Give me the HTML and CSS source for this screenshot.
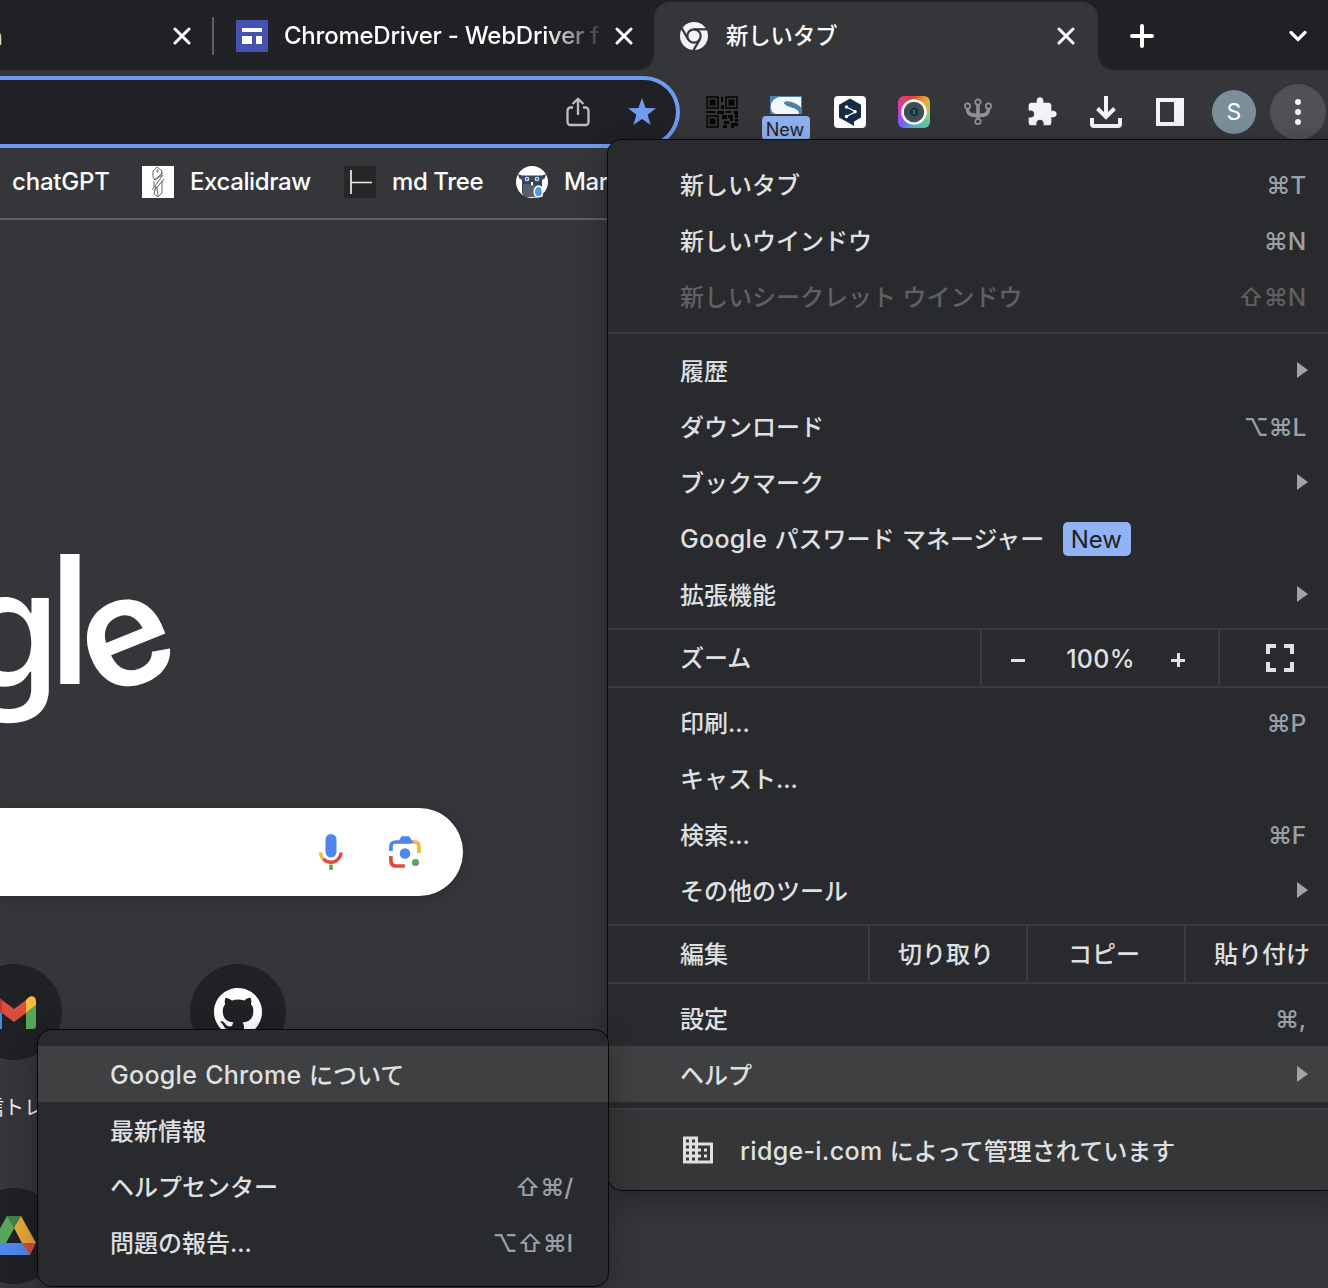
FILE: index.html
```html
<!DOCTYPE html>
<html lang="ja">
<head>
<meta charset="utf-8">
<title>新しいタブ</title>
<link rel="stylesheet" href="styles.css">
</head>
<body>
<svg class="defs" width="0" height="0" aria-hidden="true">
  <symbol id="close" viewBox="0 0 18 18"><path d="M2 2l14 14M16 2L2 16" fill="none" stroke="#fff" stroke-width="3" stroke-linecap="round"/></symbol>
  <symbol id="arrow" viewBox="0 0 11 16"><path d="M0 0l11 8-11 8z" fill="#a3a4a6"/></symbol>
</svg>
<div class="window">
  <header class="tabs">
    <div class="tabs-left">
      <span class="tab-cut"><span>n</span></span>
      <svg class="first-close" width="18" height="18"><use href="#close"/></svg>
      <i class="tab-sep"></i>
      <svg class="favicon" width="32" height="32" viewBox="0 0 32 32"><path fill="#4351af" d="M0 0h32v32H0z"/><path fill="#fff" d="M6 8h20v4H6zM6 16h10v8H6zM20 16h6v8h-6z"/></svg>
      <span class="tab-title faded">ChromeDriver - WebDriver f</span>
      <svg class="second-close" width="18" height="18"><use href="#close"/></svg>
    </div>
    <div class="tab-slot">
      <div class="tab-active">
        <svg width="28" height="28" viewBox="0 0 28 28"><circle cx="14" cy="14" r="14" fill="#f1f3f4"/><g fill="none" stroke="#35363a" stroke-width="2.2"><circle cx="14" cy="14" r="6.7"/><path d="M14 7.3h13"/><path d="M14 7.3h13" transform="rotate(120 14 14)"/><path d="M14 7.3h13" transform="rotate(240 14 14)"/></g></svg>
        <span class="tab-title">新しいタブ</span>
        <svg class="active-close" width="18" height="18"><use href="#close"/></svg>
      </div>
    </div>
    <div class="tabs-right">
      <svg width="24" height="24" viewBox="0 0 24 24"><path d="M12 2v20M2 12h20" stroke="#fff" stroke-width="4" stroke-linecap="round"/></svg>
      <svg width="20" height="14" viewBox="0 0 20 14"><path d="M3 3.500l7 7 7-7" fill="none" stroke="#fff" stroke-width="3.2" stroke-linecap="round"/></svg>
    </div>
  </header>

  <div class="toolbar">
    <div class="omnibox">
      <svg width="24" height="30" viewBox="0 0 24 30"><path d="M7 10.500H4.500a3 3 0 0 0-3 3V25a3 3 0 0 0 3 3h15a3 3 0 0 0 3-3V13.500a3 3 0 0 0-3-3H17M12 18V2M6.500 7L12 1.800 17.500 7" fill="none" stroke="#bcbdbf" stroke-width="2.300"/></svg>
      <svg width="30" height="30" viewBox="0 0 30 30"><path d="M15 1l3.600 10L29 11.200l-8.400 6.500 3.100 10.300L15 22l-8.700 6 3.100-10.300L1 11.200 11.400 11z" fill="#6f9cee"/></svg>
    </div>
    <div class="extensions">
      <div><svg width="32" height="32" viewBox="0 0 32 32"><g fill="none" stroke="#050505" stroke-width="1.500"><path d="M1 1h11v11H1zM20 1h11v11H20zM1 20h11v11H1z"/></g><path fill="#050505" d="M3.500 3.500h6v6h-6zM22.500 3.500h6v6h-6zM3.500 22.500h6v6h-6zM15 1h2v5h-2zM15 9h3v4h-3zM0 15h9v2H0zM11 15h7v3h-7zM20 15h5v2h-5zM28 15h4v7h-3v-4h-1zM16 19h5v4h-5zM22 19h5v6h-3v-3h-2zM18 25h5v3h-5zM25 27h7v3h-4v2h-3zM17 29h4v3h-4zM29 23h3v3h-3z"/></svg></div>
      <div class="ext-badged"><svg width="32" height="18" viewBox="0 0 32 18"><path fill="#4a80b0" d="M0 0h32v18H0z"/><path fill="#f5f7fa" d="M10 1h21v11C27 8 20 5 16 5.500c-3 .5-2 2.500 1 3.500 6 2 12 4 12 9H5C0 15 0 10 2 6c2-3 5-5 8-5z"/><path fill="#4a80b0" d="M14 7c2-3.500 12-1 17 4.500v5C26 10.500 16 12 14 7z"/></svg><b class="ext-new">New</b></div>
      <div><svg width="32" height="32" viewBox="0 0 32 32"><rect width="32" height="32" rx="4" fill="#fff"/><path fill="#152b44" d="M16 2.500l11 6.300v12.700l-7 4v4.500l-5-3-10-5.500V8.800z"/><path d="M12.500 11l9 4.800-9 4.700" fill="none" stroke="#fff" stroke-width="1.300"/><g fill="#fff"><circle cx="12.500" cy="11" r="1.700"/><circle cx="21" cy="15.800" r="1.700"/><circle cx="12.500" cy="20.500" r="1.700"/></g></svg></div>
      <div><span class="camera"><svg width="26" height="26" viewBox="0 0 26 26"><circle cx="13" cy="13" r="11.500" fill="#4a4b50" stroke="#fff" stroke-width="2.500"/><circle cx="13" cy="13" r="7.500" fill="#38505c"/><circle cx="13" cy="13" r="4.200" fill="#182f3f"/><path d="M12 11h2v1.500h-2zM12 13.500h2V15h-2z" fill="#5b87a8"/></svg></span></div>
      <div><svg width="30" height="28" viewBox="0 0 30 28"><g fill="none" stroke="#919191"><path d="M4.500 11c0 5 3 6.500 10.500 6.500S25.500 16 25.500 11M15 7v13" stroke-width="3.500"/><circle cx="4.500" cy="8" r="2.700" stroke-width="1.700"/><circle cx="15" cy="4" r="2.700" stroke-width="1.700"/><circle cx="25.500" cy="8" r="2.700" stroke-width="1.700"/><circle cx="15" cy="23.500" r="2.700" stroke-width="1.700"/></g></svg></div>
      <div><svg width="32" height="32" viewBox="0 0 24 24" fill="#f1f3f4"><path d="M20.500 11H19V7c0-1.100-.9-2-2-2h-4V3.500C13 2.120 11.880 1 10.500 1S8 2.120 8 3.500V5H4c-1.100 0-1.990.9-1.990 2v3.800H3.500c1.490 0 2.700 1.210 2.700 2.700s-1.210 2.700-2.700 2.700H2V20c0 1.100.9 2 2 2h3.800v-1.500c0-1.490 1.210-2.700 2.700-2.700 1.490 0 2.700 1.210 2.700 2.700V22H17c1.100 0 2-.9 2-2v-4h1.500c1.380 0 2.500-1.120 2.500-2.500S21.880 11 20.500 11z"/></svg></div>
      <div><svg width="32" height="32" viewBox="0 0 32 32"><path d="M16 0v21M7.500 12.500L16 21l8.500-8.500M2 22v6q0 2 2 2h24q2 0 2-2v-6" fill="none" stroke="#f1f3f4" stroke-width="4"/></svg></div>
      <div><svg width="28" height="28" viewBox="0 0 28 28"><path fill="#f1f3f4" fill-rule="evenodd" d="M0 0h28v28H0zM4 4v20h14V4z"/></svg></div>
      <div><span class="avatar">S</span></div>
      <div><span class="more"><i></i><i></i><i></i></span></div>
    </div>
  </div>

  <nav class="bookmarks">
    <span class="bm bm-1">chatGPT</span>
    <svg width="32" height="32" viewBox="0 0 32 32"><path fill="#fff" d="M0 0h32v32H0z"/><g fill="none" stroke="#555" stroke-width=".9"><path d="M11 5l4-4 5 4-1 5-6 4-2-3zM12 14l9-7M10 24L21 9M12 25L22 13M12 15v6M20 15v12l-4 4-4-3 2-8M15 21l1 9"/><circle cx="15.500" cy="5" r=".8"/></g></svg>
    <span class="bm bm-2">Excalidraw</span>
    <svg width="32" height="32" viewBox="0 0 32 32"><path fill="#272727" d="M0 0h32v32H0z"/><path d="M7 4v24M7 16.500h21" stroke="#eee" stroke-width="1.700"/></svg>
    <span class="bm bm-3">md Tree</span>
    <svg width="32" height="32" viewBox="0 0 32 32"><circle cx="16" cy="16" r="16" fill="#fff"/><path fill="#3d4353" d="M2 8l4 1.500h20L30 8l-1 4-3 2v13l-3 4H9l-3-4V14l-3-2z"/><path fill="#58606f" d="M7 18h6l3 3 3-3v13H9l-2-4z"/><circle cx="11" cy="13" r="2.300" fill="#dcecff"/><circle cx="21" cy="13" r="2.300" fill="#dcecff"/><circle cx="11" cy="13" r="1.300" fill="#2988e8"/><circle cx="21" cy="13" r="1.300" fill="#2988e8"/><path d="M15 16h2v3l-1 1-1-1z" fill="#fff"/><path d="M22 20c4 0 5 4 4 10l-4 1c-5-1-5-9 0-11z" fill="#4499e8" stroke="#fff" stroke-width="1.500"/></svg>
    <span class="bm bm-4">Mar</span>
  </nav>

  <main class="page">
    <svg class="logo" width="200" height="200" viewBox="0 0 200 200"><text class="logo-g" x="-41" y="158">g</text><text class="logo-l" x="47.500" y="154">l</text><text class="logo-e" transform="translate(100.500 169) rotate(-22)" x="0" y="0">e</text></svg>
    <div class="search">
      <svg width="26" height="36" viewBox="0 0 26 36"><rect x="7.500" y="0" width="11" height="23.500" rx="5.500" fill="#4f86ec"/><path d="M2.700 18.500c0 3 1 5.200 2.600 6.800" fill="none" stroke="#efb93a" stroke-width="3.300"/><path d="M5.300 25c4.500 4.500 11 4 14.500.5 2-2 3.300-4 3.300-7" fill="none" stroke="#db4e3f" stroke-width="3.300"/><path d="M11.200 30.500h3.600V36h-3.600z" fill="#58a55c"/></svg>
      <svg width="32" height="32" viewBox="0 0 32 32"><g fill="none" stroke-width="3.700"><path d="M1.900 15V11q0-5 5-5H22" stroke="#4f86ec"/><path d="M23 5.900h2q5 0 5 5V17" stroke="#efb93a"/><path d="M1.900 20v4.500q0 5.500 5 5.500h9" stroke="#db4e3f"/></g><path d="M10 4.500l2.500-4.200h7.500l5 7H10z" fill="#4f86ec"/><circle cx="16" cy="17.500" r="5.300" fill="#4f86ec"/><circle cx="26.500" cy="26.500" r="3.600" fill="#58a55c"/></svg>
    </div>
    <div class="shortcuts">
      <div class="shortcut"><span class="disc"><svg width="44" height="33" viewBox="0 0 44 33"><path fill="#4f86ec" d="M0 9l10 8v16H3q-3 0-3-3z"/><path fill="#58a55c" d="M34 17l10-8v21q0 3-3 3h-7z"/><path fill="#db4e3f" d="M10 4l12 9 12-9v13l-12 9-12-9z"/><path fill="#b83a30" d="M0 5c0-5 5-6 8-3l2 2v13L0 9z"/><path fill="#f2be42" d="M44 5c0-5-5-6-8-3l-2 2v13l10-8z"/></svg></span><span class="caption">受信トレイ</span></div>
      <div class="shortcut"><span class="disc"><svg width="48" height="48" viewBox="0 0 16 16"><path fill="#fff" d="M8 0C3.580 0 0 3.580 0 8c0 3.540 2.290 6.530 5.470 7.590.4.070.55-.17.55-.38 0-.19-.01-.82-.01-1.490-2.010.37-2.530-.49-2.690-.94-.09-.23-.48-.94-.82-1.130-.28-.15-.68-.52-.01-.53.63-.01 1.080.58 1.230.82.72 1.210 1.870.87 2.330.66.070-.52.280-.87.510-1.070-1.780-.2-3.640-.89-3.640-3.950 0-.87.310-1.590.82-2.150-.08-.2-.36-1.020.08-2.120 0 0 .67-.21 2.200.82.640-.18 1.320-.27 2-.27s1.360.09 2 .27c1.530-1.040 2.200-.82 2.200-.82.44 1.100.16 1.920.08 2.120.51.56.82 1.270.82 2.150 0 3.070-1.870 3.750-3.650 3.950.29.25.54.73.54 1.480 0 1.070-.01 1.930-.01 2.200 0 .21.15.46.55.38A8.010 8.010 0 0 0 16 8c0-4.420-3.580-8-8-8z"/></svg></span></div>
      <div class="shortcut"><span class="disc"><svg width="44" height="40" viewBox="0 0 44 40"><path fill="#58a55c" d="M15 0L0 27h14L29 0z"/><path fill="#3f8043" d="M15 0h14l-7 12z"/><path fill="#e6a93a" d="M29 0l15 27H30L22 12z"/><path fill="#4f86ec" d="M0 27h32l6 12H6z"/><path fill="#d34d3c" d="M30 27h14l-6 12z"/></svg></span></div>
    </div>
  </main>

  <div class="menu main-menu">
    <div class="row"><span>新しいタブ</span><kbd>⌘T</kbd></div>
    <div class="row"><span>新しいウインドウ</span><kbd>⌘N</kbd></div>
    <div class="row disabled"><span>新しいシークレット ウインドウ</span><kbd>⇧⌘N</kbd></div>
    <hr class="wide">
    <div class="row"><span>履歴</span><svg class="arrow"><use href="#arrow"/></svg></div>
    <div class="row"><span>ダウンロード</span><kbd>⌥⌘L</kbd></div>
    <div class="row"><span>ブックマーク</span><svg class="arrow"><use href="#arrow"/></svg></div>
    <div class="row"><span class="mixed"><span class="latin">Google</span> パスワード マネージャー</span><b class="new">New</b></div>
    <div class="row"><span>拡張機能</span><svg class="arrow"><use href="#arrow"/></svg></div>
    <div class="controls zoom">
      <span class="label">ズーム</span>
      <div class="zoom-set"><i class="minus"></i><span class="latin percent">100%</span><i class="plus"></i></div>
      <div class="fullscreen"><svg width="28" height="28" viewBox="0 0 28 28"><path d="M2 10V2h8M18 2h8v8M26 18v8h-8M10 26H2v-8" fill="none" stroke="#dfe0e1" stroke-width="4"/></svg></div>
    </div>
    <div class="row"><span>印刷...</span><kbd>⌘P</kbd></div>
    <div class="row"><span>キャスト...</span></div>
    <div class="row"><span>検索...</span><kbd>⌘F</kbd></div>
    <div class="row"><span>その他のツール</span><svg class="arrow"><use href="#arrow"/></svg></div>
    <div class="controls edit">
      <span class="label">編集</span><span class="cell">切り取り</span><span class="cell">コピー</span><span class="cell">貼り付け</span>
    </div>
    <div class="row"><span>設定</span><kbd>⌘,</kbd></div>
    <div class="row active"><span>ヘルプ</span><svg class="arrow"><use href="#arrow"/></svg></div>
    <div class="managed">
      <svg width="36" height="36" viewBox="0 0 24 24" fill="#dfe0e1"><path d="M12 7V3H2v18h20V7H12zM6 19H4v-2h2v2zm0-4H4v-2h2v2zm0-4H4V9h2v2zm0-4H4V5h2v2zm4 12H8v-2h2v2zm0-4H8v-2h2v2zm0-4H8V9h2v2zm0-4H8V5h2v2zm10 12h-8v-2h2v-2h-2v-2h2v-2h-2V9h8v10zm-2-8h-2v2h2v-2zm0 4h-2v2h2v-2z"/></svg>
      <span class="mixed"><span class="latin">ridge-i.com</span> によって管理されています</span>
    </div>
  </div>

  <div class="menu submenu">
    <div class="row active"><span class="mixed"><span class="latin">Google Chrome</span> について</span></div>
    <div class="row"><span>最新情報</span></div>
    <div class="row"><span>ヘルプセンター</span><kbd>⇧⌘/</kbd></div>
    <div class="row"><span>問題の報告...</span><kbd>⌥⇧⌘I</kbd></div>
  </div>
</div>
</body>
</html>
```

FILE: styles.css
```css
* { box-sizing: border-box; }
body { margin: 0; background: #35363a; font-family: Inter, "Noto Sans CJK JP", sans-serif; font-size: 24px; color: #fff; }
svg { display: block; flex: none; }
.defs { position: absolute; }
.window { position: relative; width: 1328px; height: 1288px; overflow: hidden; background: #35363a; white-space: nowrap; }

/* Tab strip */
.tabs { display: grid; grid-template-columns: 654px 444px 230px; height: 70px; }
.tabs-left { display: flex; align-items: center; background: #202124; border-bottom-right-radius: 16px; padding-top: 2px; }
.tab-cut { display: flex; justify-content: flex-end; width: 3px; overflow: hidden; color: #ddd; }
.first-close { margin-left: 170px; }
.tab-sep { width: 2px; height: 38px; margin-left: 21px; background: #5f6064; }
.favicon { margin-left: 22px; }
.tab-title { line-height: 36px; }
.faded { width: 316px; margin-left: 16px; overflow: hidden; font-weight: 500; letter-spacing: -.24px; -webkit-mask-image: linear-gradient(90deg, #000 262px, transparent 322px); mask-image: linear-gradient(90deg, #000 262px, transparent 322px); }
.second-close { margin-left: 15px; }
.tab-slot { background: linear-gradient(#202124 35px, #35363a 35px); padding-top: 2px; }
.tab-active { display: flex; align-items: center; height: 68px; padding: 0 23px 0 26px; background: #35363a; border-radius: 16px 16px 0 0; }
.tab-active .tab-title { margin: 0 0 0 18px; font-size: 22.3px; font-weight: 500; }
.active-close { margin-left: auto; }
.tabs-right { display: flex; align-items: center; justify-content: space-between; padding: 2px 20px 0 32px; background: #202124; border-bottom-left-radius: 16px; }

/* Toolbar */
.toolbar { display: flex; height: 78px; padding-top: 6px; }
.omnibox { display: flex; flex: none; align-items: center; justify-content: flex-end; gap: 37px; width: 680px; height: 72px; padding-right: 19px; background: #202124; border: 4px solid #6f9cee; border-left: 0; border-radius: 0 36px 36px 0; }
.extensions { display: flex; flex: none; margin-left: 10px; height: 72px; }
.extensions > div { display: flex; flex: none; align-items: center; justify-content: center; width: 64px; }
.extensions .ext-badged { flex-direction: column; justify-content: flex-start; padding-top: 20px; }
.ext-new { margin-top: 2px; width: 48px; height: 24px; padding-right: 2px; border-radius: 4px; background: #8fb0f0; color: #202124; font-size: 18px; font-weight: 400; line-height: 28px; text-align: center; }
.camera { display: grid; place-items: center; width: 32px; height: 32px; border-radius: 6px; background: conic-gradient(#e04a2c, #eda83c 45deg, #a5cc58 90deg, #63c9a2 130deg, #4aa8dd 190deg, #7463f0 225deg, #c43be0 265deg, #e03a84 310deg, #e04a2c); }
.avatar { width: 44px; height: 44px; border-radius: 50%; background: #7b8f9b; font-size: 23px; line-height: 44px; text-align: center; }
.more { display: flex; flex: none; flex-direction: column; align-items: center; justify-content: center; gap: 4px; width: 56px; height: 56px; border-radius: 50%; background: #505155; }
.more i { width: 6px; height: 6px; border-radius: 50%; background: #f1f3f4; }

/* Bookmarks */
.bookmarks { display: flex; align-items: center; height: 72px; padding: 0 0 2px 12px; border-bottom: 2px solid #5f6064; }
.bm { margin-top: -1px; font-weight: 500; letter-spacing: -.4px; }
.bm-1 { width: 130px; letter-spacing: -.2px; }
.bm-2 { width: 154px; margin-left: 16px; }
.bm-3 { width: 124px; margin-left: 16px; }
.bm-4 { margin-left: 16px; }

/* New tab page */
.page { height: 1068px; padding-top: 310px; }
.logo { overflow: hidden; fill: #fff; font-family: Inter, sans-serif; }
.logo-g { font-size: 164px; font-weight: 500; }
.logo-l { font-size: 178px; font-weight: 500; }
.logo-e { font-size: 154px; font-weight: 600; }
.search { display: flex; align-items: center; justify-content: flex-end; gap: 45px; width: 463px; height: 88px; margin-top: 78px; padding-right: 42px; background: #fff; border-radius: 0 44px 44px 0; box-shadow: 0 2px 12px rgba(0,0,0,.2); }
.shortcuts { display: grid; grid-template-columns: 224px 224px; grid-auto-rows: 224px; margin: 68px 0 0 -98px; }
.shortcut { display: flex; flex-direction: column; align-items: center; gap: 33px; }
.disc { display: grid; place-items: center; width: 96px; height: 96px; border-radius: 50%; background: #202124; }
.caption { font-size: 20px; line-height: 30px; color: #eee; }

/* Menus */
.menu { position: absolute; background: #292a2d; color: #dfe0e1; font-weight: 500; box-shadow: 0 0 0 1px #080809, 0 8px 30px rgba(0,0,0,.32); overflow: hidden; }
.main-menu { left: 608px; top: 140px; width: 740px; height: 1050px; padding-top: 16px; border-radius: 14px 0 0 14px; }
.submenu { left: 38px; top: 1030px; width: 570px; height: 256px; padding-top: 16px; border-radius: 14px; }
.row { display: flex; align-items: center; height: 56px; padding: 3px 42px 0 72px; line-height: 36px; }
.submenu .row { padding-right: 35px; }
.row kbd { margin: -2px 0 0 auto; color: #9aa0a6; font-family: Inter, "DejaVu Sans", sans-serif; font-size: 24.5px; letter-spacing: -.3px; }
.row.active { background: #3f4042; }
.row.disabled, .row.disabled kbd { color: #5f6063; }
.arrow { width: 11px; height: 16px; margin: -3px -2px 0 auto; }
.wide { margin: 8px 0; border: 0; border-top: 2px solid #3a3b3e; }
.mixed { word-spacing: 1px; }
.latin { font-size: 25px; letter-spacing: .3px; }
.new { width: 68px; height: 34px; margin: -1px 0 0 19px; padding-right: 2px; border-radius: 5px; background: #92b3f3; color: #202124; font-weight: 400; line-height: 35px; text-align: center; }
.controls { display: flex; height: 60px; margin: 6px 0; border: solid #3a3b3e; border-width: 2px 0; line-height: 58px; }
.label { padding-left: 72px; }
.zoom .label { width: 372px; }
.zoom-set { display: flex; align-items: center; width: 238px; padding: 0 33px 0 29px; justify-content: space-between; border-left: 2px solid #3a3b3e; }
.percent { margin: 2px 0 0 5px; }
.zoom-set i { width: 14px; height: 14px; margin-top: 4px; background: linear-gradient(#dfe0e1, #dfe0e1) center / 14px 3px no-repeat; }
.zoom-set .plus { background: linear-gradient(#dfe0e1, #dfe0e1) center / 14px 3px no-repeat, linear-gradient(#dfe0e1, #dfe0e1) center / 3px 14px no-repeat; }
.fullscreen { display: flex; align-items: center; padding-left: 46px; border-left: 2px solid #3a3b3e; }
.edit .label { width: 260px; }
.cell { width: 158px; padding-right: 4px; border-left: 2px solid #3a3b3e; text-align: center; }
.managed { display: flex; align-items: center; gap: 24px; height: 82px; margin-top: 6px; padding: 0 0 0 72px; border-top: 2px solid #3c3d40; background: #353638; line-height: 36px; }
.managed .mixed { margin-top: 2px; }
```
